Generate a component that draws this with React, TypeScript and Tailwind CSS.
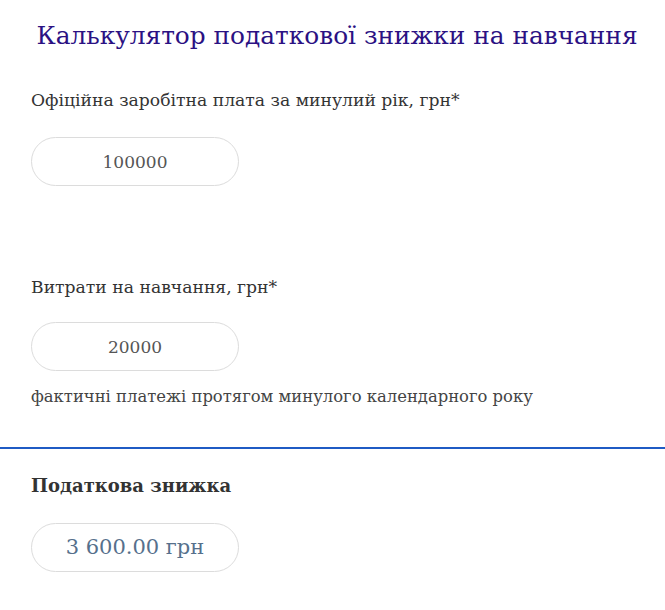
export default function App() {
  return (
    <div className="w-[665px] h-[610px] bg-white font-[family-name:'DejaVu_Serif',serif] overflow-hidden">
      <h1 className="pt-[18px] pl-[9px] text-center text-[24.8px] leading-[36px] text-[#2b1183]">
        Калькулятор податкової знижки на навчання
      </h1>

      <div className="px-[31px]">
        <p className="mt-[34px] text-[17.2px] leading-[24px] text-[#333]">
          Офіційна заробітна плата за минулий рік, грн*
        </p>
        <input
          readOnly
          value="100000"
          className="mt-[25px] w-[208px] h-[49px] rounded-full border border-[#dcdcdc] text-center text-[17px] text-[#555] outline-none"
        />

        <p className="mt-[89px] text-[17.2px] leading-[24px] text-[#333]">
          Витрати на навчання, грн*
        </p>
        <input
          readOnly
          value="20000"
          className="mt-[23px] w-[208px] h-[49px] rounded-full border border-[#dcdcdc] text-center text-[17px] text-[#555] outline-none"
        />
        <p className="mt-[15px] text-[16.4px] leading-[22px] text-[#444]">
          фактичні платежі протягом минулого календарного року
        </p>
      </div>

      <div className="mt-[39px] h-[2px] bg-[#1f5bc4]" />

      <div className="px-[31px]">
        <p className="mt-[24px] text-[18px] leading-[26px] font-bold text-[#333]">
          Податкова знижка
        </p>
        <div className="mt-[24px] w-[208px] h-[49px] rounded-full border border-[#dcdcdc] flex items-center justify-center text-[21px] text-[#56708c]">
          3 600.00 грн
        </div>
      </div>
    </div>
  );
}
